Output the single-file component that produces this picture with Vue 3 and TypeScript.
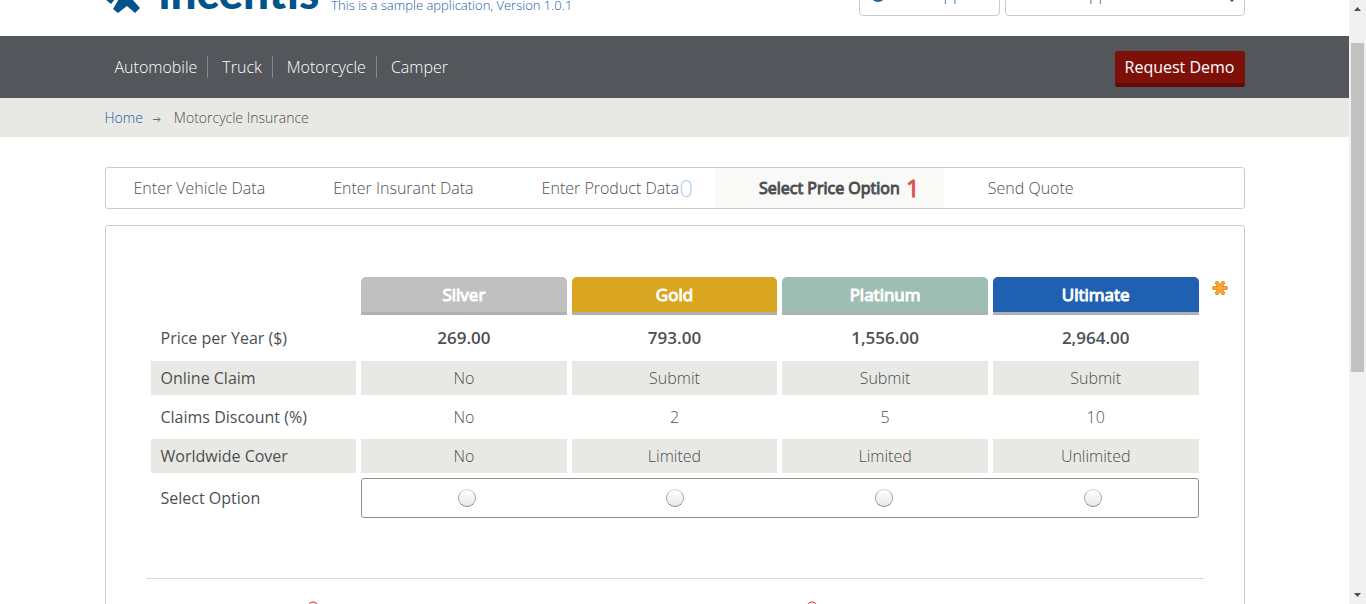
<script setup lang="ts">
import { ref } from 'vue'

interface Plan {
  id: string
  name: string
  price: string
}
interface Feature {
  label: string
  values: string[]
}

const products: string[] = ['Automobile', 'Truck', 'Motorcycle', 'Camper']
const plans: Plan[] = [
  { id: 'silver', name: 'Silver', price: '269.00' },
  { id: 'gold', name: 'Gold', price: '793.00' },
  { id: 'platinum', name: 'Platinum', price: '1,556.00' },
  { id: 'ultimate', name: 'Ultimate', price: '2,964.00' },
]
const features: Feature[] = [
  { label: 'Online Claim', values: ['No', 'Submit', 'Submit', 'Submit'] },
  { label: 'Claims Discount (%)', values: ['No', '2', '5', '10'] },
  { label: 'Worldwide Cover', values: ['No', 'Limited', 'Limited', 'Unlimited'] },
]
const selected = ref<string>('')
const search = ref<string>('')
</script>

<template>
  <div class="shell">
    <div class="page">
      <header class="header container">
        <svg class="mark" viewBox="0 0 38 38" aria-hidden="true">
          <path d="M8 34L13 38L22 31L30 38L35 33L27 24L38 10L33 6L22 18L10 6L5 11L15 22Z" fill="#00548b" />
          <path d="M0 24L6 29L10 24L5 19Z" fill="#00548b" />
        </svg>
        <span class="brand">incentis</span>
        <a class="tagline" href="#">This is a sample application, Version 1.0.1</a>
        <button class="support" type="button">
          <svg width="16" height="16" viewBox="0 0 16 16" aria-hidden="true">
            <circle cx="8" cy="8" r="7" fill="none" stroke="#1f61b0" stroke-width="2" />
          </svg>
          <span>Get Support</span>
        </button>
        <div class="search">
          <input v-model="search" type="search" aria-label="Search" placeholder="Search Support" />
          <svg width="16" height="16" viewBox="0 0 16 16" aria-hidden="true">
            <circle cx="6" cy="6" r="5" fill="none" stroke="#1f61b0" stroke-width="2" />
            <path d="M10 10L15 15" stroke="#1f61b0" stroke-width="3" />
          </svg>
        </div>
      </header>

      <div class="nav-band">
        <nav class="nav container">
          <a v-for="p in products" :key="p" class="nav-link" href="#">{{ p }}</a>
          <button class="demo" type="button">Request Demo</button>
        </nav>
      </div>

      <div class="crumb-band">
        <div class="crumbs container">
          <a href="#">Home</a>
          <svg width="8" height="7" viewBox="0 0 8 7" aria-hidden="true">
            <path d="M0 3.5H7M4.5 1L7 3.5L4.5 6" fill="none" stroke="#6d7073" />
          </svg>
          <span>Motorcycle Insurance</span>
        </div>
      </div>

      <main class="container">
        <ol class="steps">
          <li>Enter Vehicle Data</li>
          <li>Enter Insurant Data</li>
          <li>Enter Product Data<span class="count zero">0</span></li>
          <li class="current" aria-current="step">Select Price Option<span class="count one">1</span></li>
          <li class="last">Send Quote</li>
        </ol>

        <section class="card">
          <table class="plans">
            <thead>
              <tr>
                <td></td>
                <th v-for="p in plans" :key="p.id" scope="col" :class="p.id">{{ p.name }}</th>
              </tr>
            </thead>
            <tbody>
              <tr class="price">
                <th scope="row">Price per Year ($)</th>
                <td v-for="p in plans" :key="p.id">{{ p.price }}</td>
              </tr>
              <tr v-for="f in features" :key="f.label" class="feature">
                <th scope="row">{{ f.label }}</th>
                <td v-for="(v, i) in f.values" :key="i">{{ v }}</td>
              </tr>
              <tr class="select">
                <th id="select-option" scope="row">Select Option</th>
                <td colspan="4">
                  <div class="options" role="radiogroup" aria-labelledby="select-option">
                    <label v-for="p in plans" :key="p.id">
                      <input v-model="selected" type="radio" name="plan" :value="p.id" :aria-label="p.name" />
                    </label>
                  </div>
                </td>
              </tr>
            </tbody>
          </table>
          <svg class="required" width="18" height="18" viewBox="0 0 18 18" aria-hidden="true">
            <path d="M3 8H15M6 3L12 13M12 3L6 13" fill="none" stroke="#e8860f" stroke-width="4" stroke-linecap="round" />
            <path d="M3 8H15M6 3L12 13M12 3L6 13" fill="none" stroke="#ffab3d" stroke-width="2" stroke-linecap="round" />
          </svg>
          <div class="fields">
            <svg v-for="n in 2" :key="n" width="12" height="12" viewBox="0 0 12 12" aria-hidden="true">
              <circle cx="6" cy="6" r="5" fill="none" stroke="#f01818" stroke-width="1" />
              <path d="M6 4V8M4 6H8" stroke="#f01818" />
            </svg>
          </div>
        </section>
      </main>
    </div>

    <div class="scrollbar" aria-hidden="true">
      <svg width="17" height="17" viewBox="0 0 17 17"><path d="M5 11L8.5 7L12 11Z" fill="#505050" /></svg>
      <div class="thumb"></div>
      <svg width="17" height="17" viewBox="0 0 17 17"><path d="M5 6L8.5 10L12 6Z" fill="#505050" /></svg>
    </div>
  </div>
</template>

<style>
body {
  background: #fff;
  overflow: hidden;
}
</style>

<style scoped>
* {
  box-sizing: border-box;
}
.shell {
  display: flex;
  height: 100vh;
  overflow: hidden;
  color: #4c4f53;
  font-family: "Open Sans", "Noto Sans", sans-serif;
  font-size: 16px;
  font-weight: 300;
  line-height: 24px;
}
.page {
  flex: 1;
  min-width: 0;
  overflow: hidden;
}
.container {
  max-width: 1140px;
  margin: 0 auto;
}
a {
  color: #1857a8;
  text-decoration: none;
}
button,
input {
  font: inherit;
}

.header {
  display: flex;
  align-items: flex-end;
  height: 36px;
  padding-bottom: 20px;
}
.mark {
  width: 38px;
  height: 38px;
  margin: 0 16px 3px 0;
}
.brand {
  margin-bottom: 8px;
  color: #00548b;
  font-family: Lato, sans-serif;
  font-size: 46px;
  font-weight: 900;
  line-height: 32px;
}
.tagline {
  margin-left: 12px;
  font-size: 13px;
  line-height: 22px;
}
.support,
.search {
  display: flex;
  align-items: center;
  height: 44px;
  padding: 0 10px;
  border: 1px solid #ccc;
  border-radius: 4px;
  background: #fff;
}
.support {
  gap: 10px;
  width: 141px;
  margin-left: auto;
  color: #1f61b0;
}
.search {
  width: 240px;
  margin-left: 5px;
}
.search input {
  flex: 1;
  min-width: 0;
  border: 0;
  outline: 0;
  background: none;
}
.search input::placeholder {
  color: #53565a;
}

.nav-band {
  background: #53565a;
}
.nav {
  display: flex;
  align-items: center;
  height: 62px;
}
.nav-link {
  padding: 0 10px 0 14px;
  border-right: 1px solid #85878a;
  color: #fff;
  line-height: 22px;
}
.nav-link:first-child {
  padding-left: 10px;
}
.nav-link:nth-child(4) {
  border-right: 0;
}
.demo {
  margin: 4px 0 0 auto;
  padding: 4px 10px;
  border: 0;
  border-bottom: 4px solid #5e0c05;
  border-radius: 3px;
  background: #7d110a;
  color: #fff;
  font-weight: 400;
}

.crumb-band {
  background: #e8e9e4;
}
.crumbs {
  display: flex;
  align-items: center;
  height: 39px;
  font-size: 14px;
}
.crumbs svg {
  margin: 4px 13px 0 10px;
}

.steps {
  display: flex;
  margin: 30px 0 16px;
  padding: 0;
  border: 1px solid #ccc;
  border-radius: 3px;
  list-style: none;
  line-height: 40px;
}
.steps li {
  position: relative;
  padding: 0 36px 0 32px;
  white-space: nowrap;
}
.steps li:first-child {
  padding-left: 28px;
}
.steps li.current {
  padding: 0 44px;
  background: #f9f9f7;
  font-weight: 400;
  -webkit-text-stroke: 1px;
}
.steps li.last {
  padding-left: 44px;
}
.count {
  position: absolute;
  font-size: 24px;
}
.zero {
  right: 22px;
  color: #b9d0ea;
}
.one {
  right: 24px;
  color: #d9534f;
}

.card {
  position: relative;
  padding: 46px 40px 0;
  border: 1px solid #ccc;
  border-radius: 3px;
}
.plans {
  width: 100%;
  table-layout: fixed;
  border-collapse: separate;
  border-spacing: 5px;
}
.plans th,
.plans td {
  padding: 0 10px;
  text-align: center;
}
.plans thead th {
  height: 38px;
  border-bottom: 3px solid #b0b0b0;
  border-radius: 5px 5px 0 0;
  color: #fff;
  font-size: 17px;
  font-weight: 400;
  -webkit-text-stroke: 1px;
}
.silver {
  background: #c0c0c0;
}
.gold {
  background: #daa520;
}
.platinum {
  background: #9fbeb3;
}
.ultimate {
  background: #1f61b0;
}
.plans tbody th {
  text-align: left;
  font-weight: 400;
}
.price td {
  height: 36px;
  font-size: 17px;
  font-weight: 600;
}
.feature td {
  height: 34px;
}
.feature:nth-child(even) > * {
  background: #e8e9e4;
}
.plans .select td {
  height: 40px;
  padding: 0;
  border: 1px solid #8c8e90;
  border-radius: 3px;
}
.options {
  display: flex;
}
.options label {
  display: flex;
  flex: 1;
  justify-content: center;
}
.options input {
  width: 18px;
  height: 18px;
  margin: 0;
  appearance: none;
  border: 1px solid #aaa;
  border-top-color: #ccc;
  border-bottom-color: #888;
  border-radius: 50%;
  background: linear-gradient(#fff, #e9e9e9);
}
.options input:checked {
  background: radial-gradient(circle, #1f61b0 4px, #fff 5px);
}
.required {
  position: absolute;
  top: 54px;
  right: 15px;
}
.fields {
  display: grid;
  grid-template-columns: 499px 1fr;
  margin-top: 55px;
  padding: 22px 0 40px 161px;
  border-top: 1px solid #d8d8d8;
}

.scrollbar {
  display: flex;
  flex: none;
  flex-direction: column;
  width: 17px;
  background: #f1f1f1;
}
.scrollbar svg:last-child {
  margin-top: auto;
}
.thumb {
  height: calc(55% - 3px);
  margin: 26px 2px 0;
  background: #c1c1c1;
}
</style>
